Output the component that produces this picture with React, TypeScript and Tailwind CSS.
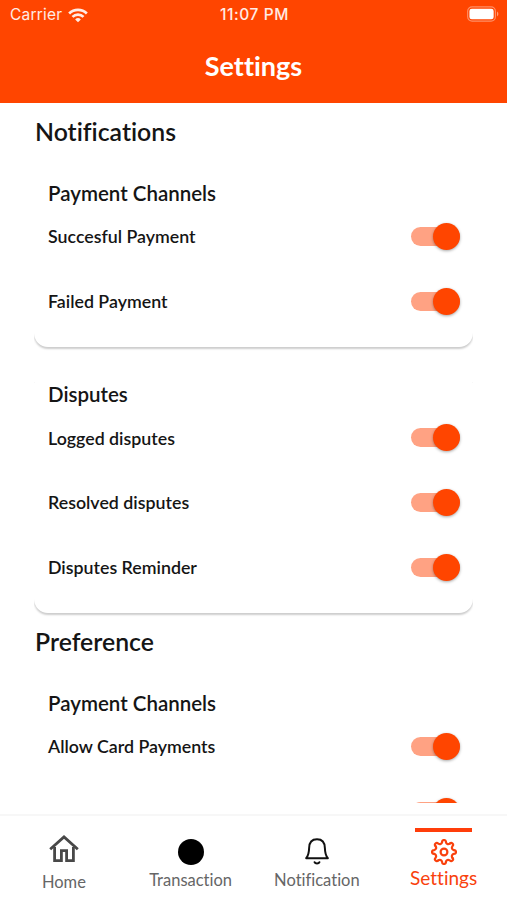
import { useState } from "react";

type SwitchProps = {
    value: boolean;
    onChange: () => void;
}

const Switch = ({ value, onChange }: SwitchProps) => {
    return (
        <button type="button" role="switch" aria-checked={value} onClick={onChange} className={`flex h-[27px] w-[49px] items-center ${value ? "justify-end" : "justify-start"}`}>
            <span className={`flex h-[19px] w-full items-center rounded-full ${value ? "justify-end bg-[#ffa283]" : "justify-start bg-gray-300"}`}>
                <span className={`size-[27px] shrink-0 rounded-full shadow-[0_1px_3px_rgba(0,0,0,0.35)] ${value ? "bg-[#ff4500]" : "bg-white"}`} />
            </span>
        </button>
    )
}

const SettingRow = ({ label }: { label?: string }) => {

    const [enabled, setEnabled] = useState(true)

    return (
        <div className="flex h-[64.6px] items-center justify-between pb-px">
            <span className="text-[17.8px] font-semibold">{label}</span>
            <Switch value={enabled} onChange={() => setEnabled(!enabled)} />
        </div>
    )
}

const SettingCard = ({ title, items }: { title: string; items: string[] }) => {
    return (
        <div className="mb-[11px] rounded-[14px] bg-white pt-6 pr-[13px] pb-[13px] pl-[14px] [clip-path:inset(24px_0_-6px_0)] shadow-[0_2px_2px_rgba(0,0,0,0.2)]">
            <h3 className="text-[20.5px] leading-6 font-semibold">{title}</h3>
            {items.map((item, i) => <SettingRow key={i} label={item} />)}
        </div>
    )
}

const SectionTitle = ({ label }: { label: string }) => (
    <h2 className="mb-[10px] pl-px text-[24.8px] leading-[30px] font-semibold">{label}</h2>
)

const StatusBar = () => {
    return (
        <div className="grid h-[30px] grid-cols-3 items-center pr-2 pl-[10px] font-[Inter,sans-serif] text-[15.5px] text-white/90">
            <div className="flex items-center gap-[6px]">
                <span className="tracking-[0.2px]">Carrier</span>
                <svg width="20" height="15" viewBox="0 0 21 15" fill="none" stroke="currentColor" strokeWidth="2.8">
                    <path d="M1.2 5.4a13.2 13.2 0 0 1 18.6 0" />
                    <path d="M4.7 9a8.2 8.2 0 0 1 11.6 0" />
                    <path d="M10.5 14.6 7.5 11.6a4.3 4.3 0 0 1 6 0z" fill="currentColor" stroke="none" />
                </svg>
            </div>
            <span className="text-center font-medium tracking-[0.6px]">11:07 PM</span>
            <svg className="-mt-[2px] justify-self-end" width="32" height="16" viewBox="0 0 33 16">
                <rect x="0.7" y="0.7" width="28.6" height="14.6" rx="4.5" fill="none" stroke="white" strokeOpacity="0.4" strokeWidth="1.2" />
                <rect x="2.5" y="2.5" width="25" height="11" rx="2.5" fill="white" />
                <path d="M31 5.5c1.8 1 1.8 4 0 5z" fill="white" fillOpacity="0.5" />
            </svg>
        </div>
    )
}

const HomeIcon = () => (
    <svg width="30" height="28" viewBox="0 0 30 28" fill="none" stroke="#484848" strokeWidth="2.8">
        <path d="M1.2 14.2 15 1.9l13.8 12.3" />
        <path d="M5.6 12v13.6h6.8v-10h5.2v10h6.8V12" />
    </svg>
)

const BellIcon = () => (
    <svg width="24" height="27" viewBox="0 0 24 27" fill="none" stroke="#111" strokeWidth="2" strokeLinecap="round" strokeLinejoin="round">
        <path d="M1.2 20.2c2-2.6 2.8-4.7 2.9-10C4.2 4.4 7.3 1.3 12 1.3s7.8 3.1 7.9 8.9c.1 5.3.9 7.4 2.9 10z" />
        <path d="M9.6 24.2c.8 1.6 4 1.6 4.8 0" />
    </svg>
)

// one tooth and the valley after it, repeated around the centre
const GearIcon = () => (
    <svg className="mt-[7px]" width="26" height="26" viewBox="-13 -13 26 26" fill="none" stroke="currentColor" strokeWidth="2.2" strokeLinecap="round">
        {[0, 45, 90, 135, 180, 225, 270, 315].map(angle => (
            <path key={angle} transform={`rotate(${angle})`} d="M-1.9-9.9A1.9 2.1 0 0 1 1.9-9.9C2.3-8 4.02-7.27 5.66-8.34" />
        ))}
        <circle r="3.4" />
    </svg>
)

const TabBar = () => {
    return (
        <nav className="grid h-[86px] shrink-0 grid-cols-4 border-t-2 border-[#f7f7f7] text-[16.5px] leading-5 text-[#666]">
            <div className="flex flex-col items-center pt-[19px] pl-px">
                <HomeIcon />
                <span className="mt-[9px]">Home</span>
            </div>
            <div className="flex flex-col items-center pt-[23px] pl-px">
                <span className="size-[26px] rounded-full bg-black" />
                <span className="mt-[5px]">Transaction</span>
            </div>
            <div className="flex flex-col items-center pt-[22px]">
                <BellIcon />
                <span className="mt-[5px]">Notification</span>
            </div>
            <div className="flex flex-col items-center pt-3 text-[#f9410d]">
                <span className="h-1 w-[57px] bg-[#ff3d0a]" />
                <GearIcon />
                <span className="mt-[3px] text-[19px]">Settings</span>
            </div>
        </nav>
    )
}

export default function App() {
    return (
        <div className="flex h-screen flex-col overflow-hidden bg-white font-[Lato,sans-serif] text-[#151515] [font-variant-ligatures:none]">
            <header className="h-[103px] shrink-0 bg-[#ff4500]">
                <StatusBar />
                <h1 className="mt-5 text-center text-[27px] leading-8 font-bold text-white">Settings</h1>
            </header>
            <main className="mb-[11px] min-h-0 flex-1 overflow-hidden px-[34px] pt-[14px]">
                <SectionTitle label="Notifications" />
                <SettingCard title="Payment Channels" items={["Succesful Payment", "Failed Payment"]} />
                <SettingCard title="Disputes" items={["Logged disputes", "Resolved disputes", "Disputes Reminder"]} />
                <div className="pt-[3px]">
                    <SectionTitle label="Preference" />
                    <SettingCard title="Payment Channels" items={["Allow Card Payments", ""]} />
                </div>
            </main>
            <TabBar />
        </div>
    )
}
